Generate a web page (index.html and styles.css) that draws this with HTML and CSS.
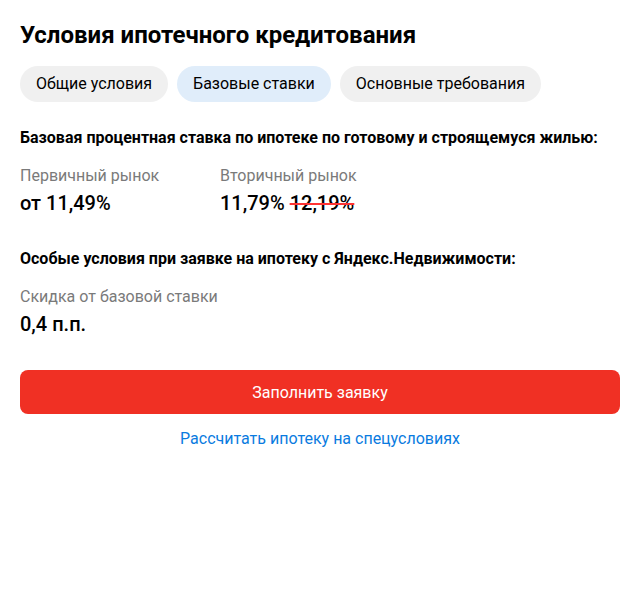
FILE: index.html
```html
<!DOCTYPE html>
<html lang="ru">
<head>
<meta charset="utf-8">
<link rel="stylesheet" href="styles.css">
</head>
<body>
<div class="page">
  <h1 class="title">Условия ипотечного кредитования</h1>
  <div class="tabs">
    <div class="tab">Общие условия</div>
    <div class="tab tab-active">Базовые ставки</div>
    <div class="tab">Основные требования</div>
  </div>
  <h2 class="subtitle sub-1">Базовая процентная ставка по ипотеке по готовому и строящемуся жилью:</h2>
  <div class="rates">
    <div class="rate rate-first">
      <div class="label">Первичный рынок</div>
      <div class="value">от 11,49%</div>
    </div>
    <div class="rate">
      <div class="label">Вторичный рынок</div>
      <div class="value">11,79% <span class="old">12,19%</span></div>
    </div>
  </div>
  <h2 class="subtitle sub-2">Особые условия при заявке на ипотеку с Яндекс.Недвижимости:</h2>
  <div class="rate">
    <div class="label">Скидка от базовой ставки</div>
    <div class="value">0,4 п.п.</div>
  </div>
  <button class="btn">Заполнить заявку</button>
  <a class="link" href="#">Рассчитать ипотеку на спецусловиях</a>
</div>
</body>
</html>
```
FILE: styles.css
```css
* { box-sizing: border-box; }
body {
  margin: 0;
  background: #fff;
  font-family: Roboto, "Noto Sans", sans-serif;
  color: #000;
}
.page {
  padding: 20px 20px;
  display: flex;
  flex-direction: column;
}
.title {
  margin: 0;
  font-size: 24px;
  line-height: 30px;
  font-weight: 700;
}
.tabs {
  display: flex;
  gap: 9px;
  margin-top: 16px;
}
.tab {
  height: 36px;
  line-height: 36px;
  padding: 0 16px;
  border-radius: 18px;
  background: #f0f0f0;
  font-size: 16px;
  color: #000;
}
.tab-active { background: #e0edfa; }
.subtitle {
  margin: 0;
  font-size: 16px;
  line-height: 20px;
  font-weight: 700;
}
.sub-1 { margin-top: 26px; }
.sub-2 { margin-top: 34px; }
.rates {
  display: flex;
}
.rate-first { width: 200px; }
.label {
  margin-top: 18px;
  font-size: 16px;
  line-height: 20px;
  color: #7a7a7a;
}
.value {
  margin-top: 5px;
  font-size: 20px;
  line-height: 24px;
  font-weight: 500;
}
.old {
  text-decoration: line-through;
  text-decoration-color: #f33;
  text-decoration-thickness: 2px;
}
.btn {
  margin-top: 34px;
  height: 44px;
  border: 0;
  border-radius: 8px;
  background: #f03024;
  color: #fff;
  font-family: inherit;
  font-size: 16px;
}
.link {
  margin-top: 15px;
  align-self: center;
  font-size: 16px;
  line-height: 20px;
  color: #0a7be0;
  text-decoration: none;
}
```
